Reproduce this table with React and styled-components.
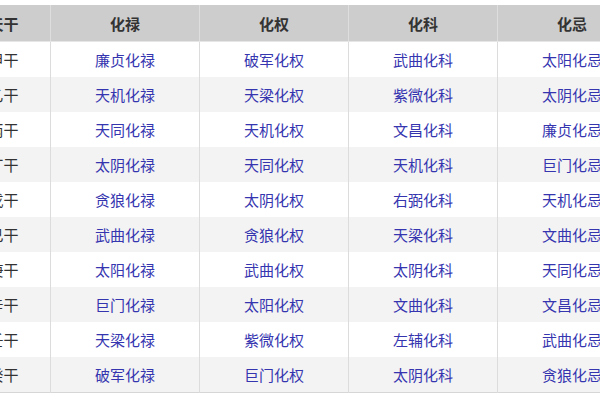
import styled, { createGlobalStyle } from "styled-components"

const GlobalStyle = createGlobalStyle`
    html, body {
        margin: 0;
        padding: 0;
        background: #fff;
        overflow: hidden;
    }
`

const Page = styled.div`
    width: 600px;
    height: 400px;
    overflow: hidden;
    padding-top: 5px;
    box-sizing: border-box;
`

const Table = styled.table`
    width: 684px;
    min-width: 684px;
    margin-left: -43px;
    border-collapse: collapse;
    table-layout: fixed;
    font-family: "Noto Sans CJK SC", "Liberation Sans", sans-serif;
    font-size: 15px;
    border-bottom: 1px solid #d6d6d6;
`

const HeadCell = styled.th`
    width: ${props => props.$first ? "93px" : "148px"};
    height: 36px;
    padding: 0;
    background: #cdcdcd;
    color: #333;
    font-weight: bold;
    text-align: center;
    border-left: 1px solid #dedede;
    border-bottom: 1px solid #e6e6e6;
    &:first-child {
        border-left: none;
    }
`

const Row = styled.tr`
    background: ${props => props.$odd ? "#f3f3f3" : "#fff"};
`

const Cell = styled.td`
    height: 35px;
    padding: 0;
    text-align: center;
    color: ${props => props.$first ? "#333" : "#3535b0"};
    border-left: 1px solid #dcdcdc;
    &:first-child {
        border-left: none;
    }
`

const rows = [
    ["甲干", "廉贞化禄", "破军化权", "武曲化科", "太阳化忌"],
    ["乙干", "天机化禄", "天梁化权", "紫微化科", "太阴化忌"],
    ["丙干", "天同化禄", "天机化权", "文昌化科", "廉贞化忌"],
    ["丁干", "太阴化禄", "天同化权", "天机化科", "巨门化忌"],
    ["戊干", "贪狼化禄", "太阴化权", "右弼化科", "天机化忌"],
    ["己干", "武曲化禄", "贪狼化权", "天梁化科", "文曲化忌"],
    ["庚干", "太阳化禄", "武曲化权", "太阴化科", "天同化忌"],
    ["辛干", "巨门化禄", "太阳化权", "文曲化科", "文昌化忌"],
    ["壬干", "天梁化禄", "紫微化权", "左辅化科", "武曲化忌"],
    ["癸干", "破军化禄", "巨门化权", "太阴化科", "贪狼化忌"],
]

export default function App() {
    return <>
        <GlobalStyle />
        <Page>
            <Table>
                <thead>
                    <tr>
                        <HeadCell $first>天干</HeadCell>
                        <HeadCell>化禄</HeadCell>
                        <HeadCell>化权</HeadCell>
                        <HeadCell>化科</HeadCell>
                        <HeadCell>化忌</HeadCell>
                    </tr>
                </thead>
                <tbody>
                    {rows.map((row, i) => <Row key={row[0]} $odd={i % 2 === 1}>
                        {row.map((text, j) => <Cell key={j} $first={j === 0}>{text}</Cell>)}
                    </Row>)}
                </tbody>
            </Table>
        </Page>
    </>
}
